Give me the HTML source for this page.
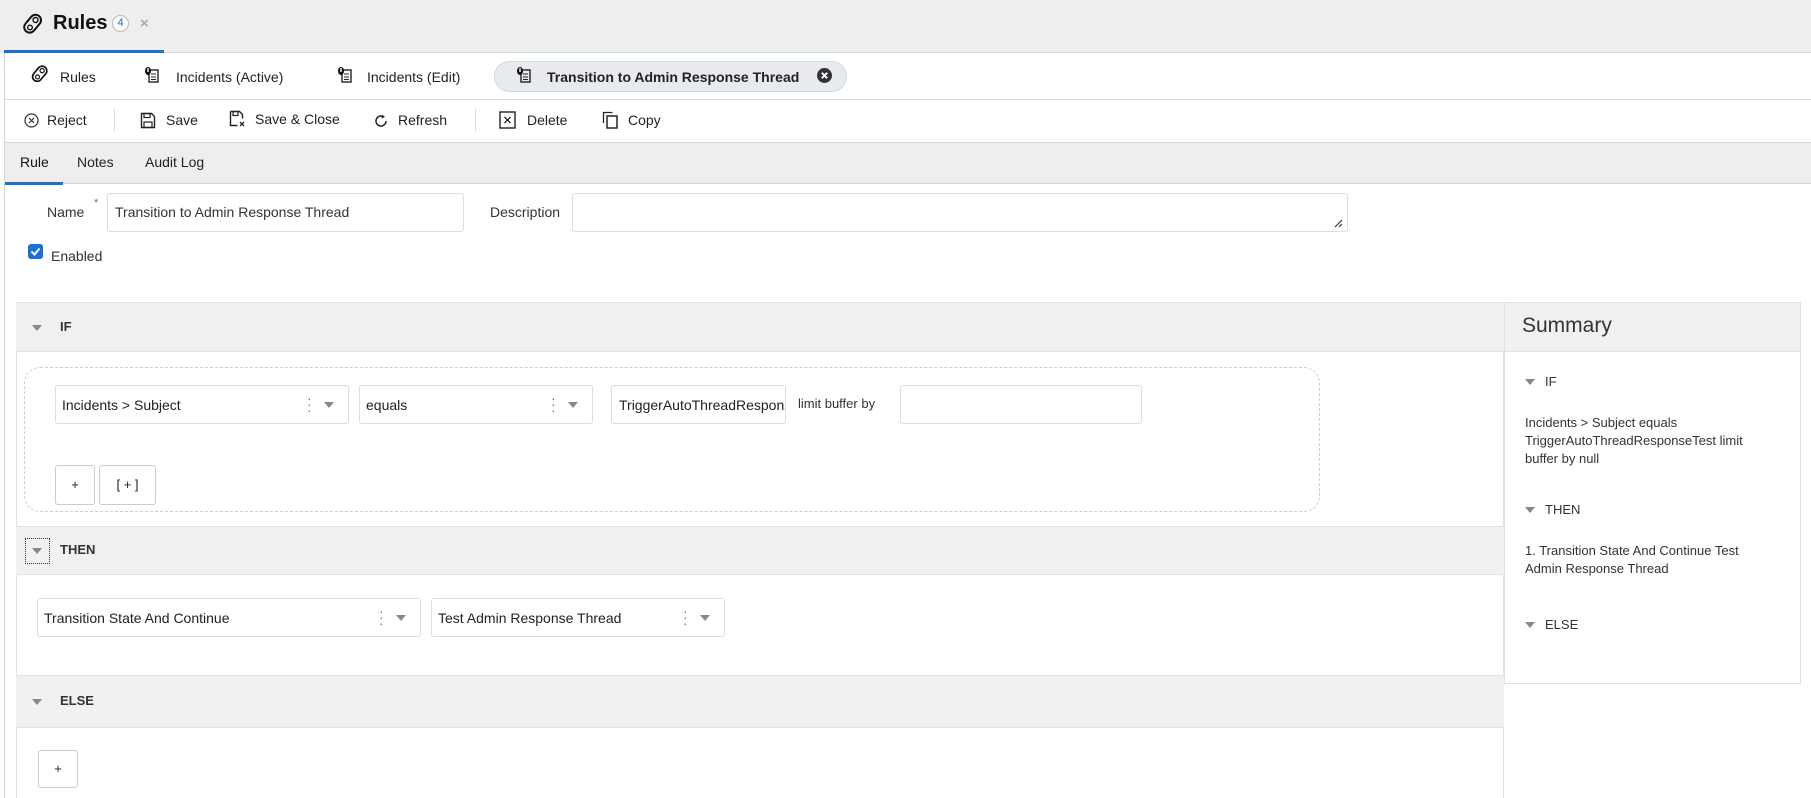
<!DOCTYPE html>
<html><head><meta charset="utf-8"><style>
*{box-sizing:border-box;margin:0;padding:0}
body{width:1811px;height:798px;overflow:hidden;background:#fff;font-family:"Liberation Sans",sans-serif;font-size:14px;color:#222;position:relative}
.a{position:absolute}
.t{position:absolute;white-space:nowrap}
.inp{position:absolute;border:1px solid #ddd;border-radius:3px;background:#fff}
.sec{position:absolute;left:16px;width:1488px;background:#f1f1f1;border-top:1px solid #dfe3e6;border-bottom:1px solid #dfe3e6}
.tri{position:absolute;width:0;height:0;border-left:5px solid transparent;border-right:5px solid transparent;border-top:6px solid #888}
.dd{position:absolute;border:1px solid #ddd;border-radius:3px;background:#fff;height:39px}
.dd span{position:absolute;left:6px;top:11px;white-space:nowrap}
.dots{position:absolute;top:9px;width:3px;color:#777;font-size:14px;line-height:6px}
.btn{position:absolute;border:1px solid #ccc;border-radius:3px;background:#fff;text-align:center;font-size:13px}
</style></head><body>
<div class="a" style="left:0;top:0;width:1811px;height:53px;background:#eeeeee"></div>
<div class="a" style="left:4px;top:50px;width:160px;height:3px;background:#1a73c8"></div>
<div class="a" style="left:164px;top:52px;width:1647px;height:1px;background:#c8d6e2"></div>
<svg class="a" style="left:20px;top:11px" width="26" height="26" viewBox="0 0 26 26"><rect x="3" y="7" width="20" height="11" rx="5.5" transform="rotate(-50 13 13)" fill="none" stroke="#111" stroke-width="2"/><circle cx="15.5" cy="9" r="2.5" fill="none" stroke="#111" stroke-width="1.4"/><circle cx="10" cy="16.5" r="2.3" fill="none" stroke="#111" stroke-width="1.4"/></svg>
<div class="t" style="left:53px;top:12px;font-size:20px;font-weight:bold;color:#111">Rules</div>
<div class="a" style="left:112px;top:15px;width:17px;height:17px;border-radius:50%;border:1px solid #bbb;background:#fafafa;color:#1a73c8;font-size:11px;text-align:center;line-height:15px">4</div>
<div class="t" style="left:140px;top:15px;color:#aaa;font-size:15px;font-weight:bold">×</div>
<div class="a" style="left:4px;top:53px;width:1807px;height:47px;background:#fff;border-bottom:1px solid #cfdde8"></div>
<svg class="a" style="left:29px;top:63px" width="22" height="22" viewBox="0 0 26 26"><rect x="3" y="7" width="20" height="11" rx="5.5" transform="rotate(-50 13 13)" fill="none" stroke="#111" stroke-width="2"/><circle cx="15.5" cy="9" r="2.5" fill="none" stroke="#111" stroke-width="1.4"/><circle cx="10" cy="16.5" r="2.3" fill="none" stroke="#111" stroke-width="1.4"/></svg>
<div class="t" style="left:60px;top:69px">Rules</div>
<svg class="a" style="left:144px;top:66px" width="16" height="18" viewBox="0 0 16 18"><rect x="5" y="4" width="9" height="12" fill="none" stroke="#222" stroke-width="1.4"/><path d="M7 8h5M7 11h5M7 13.5h5" stroke="#222"/><ellipse cx="4" cy="5" rx="3" ry="4" fill="#111"/><rect x="3.3" y="2" width="1.4" height="4" fill="#fff"/></svg>
<div class="t" style="left:176px;top:69px">Incidents (Active)</div>
<svg class="a" style="left:337px;top:66px" width="16" height="18" viewBox="0 0 16 18"><rect x="5" y="4" width="9" height="12" fill="none" stroke="#222" stroke-width="1.4"/><path d="M7 8h5M7 11h5M7 13.5h5" stroke="#222"/><ellipse cx="4" cy="5" rx="3" ry="4" fill="#111"/><rect x="3.3" y="2" width="1.4" height="4" fill="#fff"/></svg>
<div class="t" style="left:367px;top:69px">Incidents (Edit)</div>
<div class="a" style="left:494px;top:61px;width:353px;height:31px;border-radius:16px;background:#e8eaf0;border:1px solid #cdd"></div>
<svg class="a" style="left:516px;top:66px" width="16" height="18" viewBox="0 0 16 18"><rect x="5" y="4" width="9" height="12" fill="none" stroke="#222" stroke-width="1.4"/><path d="M7 8h5M7 11h5M7 13.5h5" stroke="#222"/><ellipse cx="4" cy="5" rx="3" ry="4" fill="#111"/><rect x="3.3" y="2" width="1.4" height="4" fill="#fff"/></svg>
<div class="t" style="left:547px;top:69px;font-weight:bold;font-size:14px">Transition to Admin Response Thread</div>
<svg class="a" style="left:817px;top:68px" width="15" height="15" viewBox="0 0 14 14"><circle cx="7" cy="7" r="7" fill="#333"/><path d="M4.5 4.5l5 5M9.5 4.5l-5 5" stroke="#fff" stroke-width="1.8"/></svg>
<div class="a" style="left:4px;top:100px;width:1807px;height:43px;background:#fff;border-bottom:1px solid #cfd5da"></div>
<svg class="a" style="left:24px;top:113px" width="15" height="15" viewBox="0 0 15 15"><circle cx="7.5" cy="7.5" r="6.5" fill="none" stroke="#333" stroke-width="1.2"/><path d="M5 5l5 5M10 5l-5 5" stroke="#333" stroke-width="1.2"/></svg>
<div class="t" style="left:47px;top:112px">Reject</div>
<div class="a" style="left:114px;top:108px;width:1px;height:24px;background:#ddd"></div>
<svg class="a" style="left:140px;top:112px" width="16" height="17" viewBox="0 0 16 17"><path d="M1.5 1.5h10l3 3v11h-13z" fill="none" stroke="#222" stroke-width="1.4"/><rect x="4" y="1.5" width="6" height="4" fill="none" stroke="#222" stroke-width="1.2"/><rect x="4" y="10" width="8" height="5.5" fill="none" stroke="#222" stroke-width="1.2"/></svg>
<div class="t" style="left:166px;top:112px">Save</div>
<svg class="a" style="left:229px;top:110px" width="18" height="19" viewBox="0 0 18 19"><path d="M1.5 1.5h9l3 3v4M1.5 1.5v14h7" fill="none" stroke="#222" stroke-width="1.4"/><rect x="4" y="1.5" width="5" height="4" fill="none" stroke="#222" stroke-width="1.2"/><path d="M11 12l4 4M15 12l-4 4" stroke="#222" stroke-width="1.3"/></svg>
<div class="t" style="left:255px;top:111px">Save &amp; Close</div>
<svg class="a" style="left:373px;top:113px" width="16" height="16" viewBox="0 0 16 16"><path d="M13 8a5 5 0 1 1-2-4" fill="none" stroke="#222" stroke-width="1.5"/><path d="M9 1.5l3 2.5-3.5 1.5z" fill="#222"/></svg>
<div class="t" style="left:398px;top:112px">Refresh</div>
<div class="a" style="left:475px;top:108px;width:1px;height:24px;background:#ddd"></div>
<svg class="a" style="left:499px;top:111px" width="17" height="18" viewBox="0 0 17 18"><rect x="1" y="1" width="15" height="16" fill="none" stroke="#222" stroke-width="1.4"/><path d="M5.5 6l6 6M11.5 6l-6 6" stroke="#222" stroke-width="1.3"/></svg>
<div class="t" style="left:527px;top:112px">Delete</div>
<svg class="a" style="left:602px;top:111px" width="17" height="18" viewBox="0 0 17 18"><path d="M1.5 12V1.5h9" fill="none" stroke="#222" stroke-width="1.3"/><rect x="5" y="5" width="10" height="12" fill="none" stroke="#222" stroke-width="1.5"/></svg>
<div class="t" style="left:628px;top:112px">Copy</div>
<div class="a" style="left:4px;top:143px;width:1807px;height:41px;background:#eeeeee;border-bottom:1px solid #d8d8d8"></div>
<div class="t" style="left:20px;top:154px;color:#111">Rule</div>
<div class="a" style="left:4px;top:182px;width:59px;height:3px;background:#1a73c8"></div>
<div class="t" style="left:77px;top:154px;color:#222">Notes</div>
<div class="t" style="left:145px;top:154px;color:#222">Audit Log</div>
<div class="a" style="left:4px;top:53px;width:1px;height:745px;background:#cfd5da"></div>
<div class="t" style="left:47px;top:204px;color:#333">Name</div>
<div class="t" style="left:94px;top:197px;color:#4a8a4a;font-size:11px">*</div>
<div class="inp" style="left:107px;top:193px;width:357px;height:39px"></div>
<div class="t" style="left:115px;top:204px;color:#333">Transition to Admin Response Thread</div>
<div class="t" style="left:490px;top:204px;color:#333">Description</div>
<div class="inp" style="left:572px;top:193px;width:776px;height:39px"></div>
<svg class="a" style="left:1333px;top:218px" width="10" height="10" viewBox="0 0 10 10"><path d="M9 2L2 9M9 6L6 9" stroke="#333" stroke-width="1.2"/></svg>
<div class="a" style="left:28px;top:244px;width:15px;height:15px;border-radius:3px;background:#1a6fd8"></div>
<svg class="a" style="left:28px;top:244px" width="15" height="15" viewBox="0 0 15 15"><path d="M3.5 7.5l3 3 5-6" fill="none" stroke="#fff" stroke-width="2"/></svg>
<div class="t" style="left:51px;top:248px;color:#333">Enabled</div>
<div class="sec" style="top:302px;height:50px"></div>
<div class="tri" style="left:32px;top:325px"></div>
<div class="t" style="left:60px;top:319px;font-size:13px;font-weight:bold;color:#333">IF</div>
<div class="a" style="left:16px;top:352px;width:1488px;height:175px;border-left:1px solid #dfe3e6;border-right:1px solid #dfe3e6"></div>
<div class="a" style="left:24px;top:367px;width:1296px;height:145px;border:1px dashed #ccc;border-radius:16px"></div>
<div class="dd" style="left:55px;top:385px;width:294px"><span>Incidents &gt; Subject</span><div class="dots" style="left:251px">·<br>·<br>·</div><div class="tri" style="left:268px;top:16px"></div></div>
<div class="dd" style="left:359px;top:385px;width:234px"><span>equals</span><div class="dots" style="left:191px">·<br>·<br>·</div><div class="tri" style="left:208px;top:16px"></div></div>
<div class="inp" style="left:611px;top:385px;width:175px;height:39px;overflow:hidden"><span class="t" style="left:7px;top:11px">TriggerAutoThreadResponseTest</span></div>
<div class="t" style="left:798px;top:396px;color:#333;font-size:13px">limit buffer by</div>
<div class="inp" style="left:900px;top:385px;width:242px;height:39px"></div>
<div class="btn" style="left:55px;top:465px;width:40px;height:40px;line-height:38px">+</div>
<div class="btn" style="left:99px;top:465px;width:57px;height:40px;line-height:38px">[ + ]</div>
<div class="sec" style="top:526px;height:49px"></div>
<div class="a" style="left:25px;top:538px;width:25px;height:26px;border:1px dotted #333"></div>
<div class="tri" style="left:32px;top:548px"></div>
<div class="t" style="left:60px;top:542px;font-size:13px;font-weight:bold;color:#333">THEN</div>
<div class="a" style="left:16px;top:575px;width:1488px;height:100px;border-left:1px solid #dfe3e6;border-right:1px solid #dfe3e6"></div>
<div class="dd" style="left:37px;top:598px;width:384px"><span>Transition State And Continue</span><div class="dots" style="left:341px">·<br>·<br>·</div><div class="tri" style="left:358px;top:16px"></div></div>
<div class="dd" style="left:431px;top:598px;width:294px"><span>Test Admin Response Thread</span><div class="dots" style="left:251px">·<br>·<br>·</div><div class="tri" style="left:268px;top:16px"></div></div>
<div class="sec" style="top:675px;height:53px"></div>
<div class="tri" style="left:32px;top:699px"></div>
<div class="t" style="left:60px;top:693px;font-size:13px;font-weight:bold;color:#333">ELSE</div>
<div class="a" style="left:16px;top:728px;width:1488px;height:70px;border-left:1px solid #dfe3e6;border-right:1px solid #dfe3e6"></div>
<div class="btn" style="left:38px;top:750px;width:40px;height:38px;line-height:36px">+</div>
<div class="a" style="left:1504px;top:302px;width:297px;height:382px;border:1px solid #dfe3e6;background:#fff"></div>
<div class="a" style="left:1505px;top:303px;width:295px;height:49px;background:#f1f1f1;border-bottom:1px solid #dfe3e6"></div>
<div class="t" style="left:1522px;top:314px;font-size:21px;color:#333">Summary</div>
<div class="tri" style="left:1525px;top:379px"></div>
<div class="t" style="left:1545px;top:374px;font-size:13px;color:#333">IF</div>
<div class="a" style="left:1525px;top:414px;width:248px;font-size:13px;line-height:18px;color:#333">Incidents &gt; Subject equals TriggerAutoThreadResponseTest limit buffer by null</div>
<div class="tri" style="left:1525px;top:507px"></div>
<div class="t" style="left:1545px;top:502px;font-size:13px;color:#333">THEN</div>
<div class="a" style="left:1525px;top:542px;width:248px;font-size:13px;line-height:18px;color:#333">1. Transition State And Continue Test Admin Response Thread</div>
<div class="tri" style="left:1525px;top:622px"></div>
<div class="t" style="left:1545px;top:617px;font-size:13px;color:#333">ELSE</div>
</body></html>
